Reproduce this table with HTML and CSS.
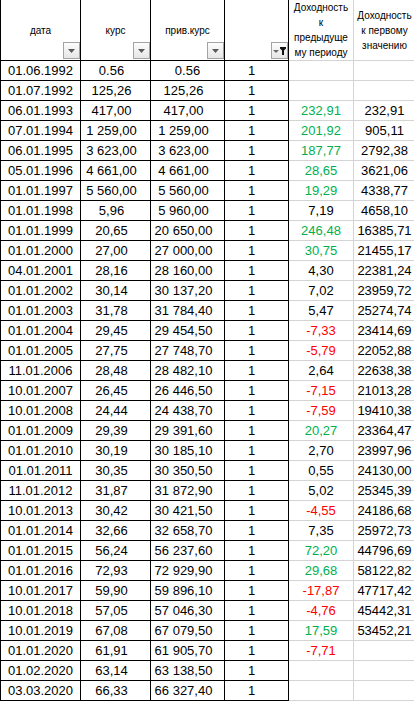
FILE: index.html
```html
<!DOCTYPE html>
<html lang="ru">
<head>
<meta charset="utf-8">
<title>Доходность</title>
<link rel="stylesheet" href="styles.css">
</head>
<body>
<div class="sheet">
  <div class="hd c1">дата<span class="flt"><svg width="15" height="15" viewBox="0 0 15 15"><path d="M4 6h7l-3.5 4z" fill="#5a5a5a"/></svg></span></div>
  <div class="hd">курс<span class="flt"><svg width="15" height="15" viewBox="0 0 15 15"><path d="M4 6h7l-3.5 4z" fill="#5a5a5a"/></svg></span></div>
  <div class="hd">прив.курс<span class="flt"><svg width="15" height="15" viewBox="0 0 15 15"><path d="M4 6h7l-3.5 4z" fill="#5a5a5a"/></svg></span></div>
  <div class="hd"><span class="flt"><svg width="15" height="15" viewBox="0 0 15 15"><path d="M1 7h6l-3 3z" fill="#6a6a6a"/><path d="M8 4h6v1.5l-2 2V12h-2V7.5l-2-2z" fill="#111"/></svg></span></div>
  <div class="hd c5">Доходность<br>к<br>предыдуще<br>му периоду</div>
  <div class="hd c6">Доходность<br>к первому<br>значению</div>

  <div class="cell c1">01.06.1992</div><div class="cell c2">0.56</div><div class="cell c3 txt">0.56</div><div class="cell c4">1</div><div class="cell c5"></div><div class="cell c6"></div>
  <div class="cell c1">01.07.1992</div><div class="cell c2">125,26</div><div class="cell c3">125,26</div><div class="cell c4">1</div><div class="cell c5"></div><div class="cell c6"></div>
  <div class="cell c1">06.01.1993</div><div class="cell c2">417,00</div><div class="cell c3">417,00</div><div class="cell c4">1</div><div class="cell c5 g">232,91</div><div class="cell c6">232,91</div>
  <div class="cell c1">07.01.1994</div><div class="cell c2">1 259,00</div><div class="cell c3">1 259,00</div><div class="cell c4">1</div><div class="cell c5 g">201,92</div><div class="cell c6">905,11</div>
  <div class="cell c1">06.01.1995</div><div class="cell c2">3 623,00</div><div class="cell c3">3 623,00</div><div class="cell c4">1</div><div class="cell c5 g">187,77</div><div class="cell c6">2792,38</div>
  <div class="cell c1">05.01.1996</div><div class="cell c2">4 661,00</div><div class="cell c3">4 661,00</div><div class="cell c4">1</div><div class="cell c5 g">28,65</div><div class="cell c6">3621,06</div>
  <div class="cell c1">01.01.1997</div><div class="cell c2">5 560,00</div><div class="cell c3">5 560,00</div><div class="cell c4">1</div><div class="cell c5 g">19,29</div><div class="cell c6">4338,77</div>
  <div class="cell c1">01.01.1998</div><div class="cell c2">5,96</div><div class="cell c3">5 960,00</div><div class="cell c4">1</div><div class="cell c5">7,19</div><div class="cell c6">4658,10</div>
  <div class="cell c1">01.01.1999</div><div class="cell c2">20,65</div><div class="cell c3">20 650,00</div><div class="cell c4">1</div><div class="cell c5 g">246,48</div><div class="cell c6">16385,71</div>
  <div class="cell c1">01.01.2000</div><div class="cell c2">27,00</div><div class="cell c3">27 000,00</div><div class="cell c4">1</div><div class="cell c5 g">30,75</div><div class="cell c6">21455,17</div>
  <div class="cell c1">04.01.2001</div><div class="cell c2">28,16</div><div class="cell c3">28 160,00</div><div class="cell c4">1</div><div class="cell c5">4,30</div><div class="cell c6">22381,24</div>
  <div class="cell c1">01.01.2002</div><div class="cell c2">30,14</div><div class="cell c3">30 137,20</div><div class="cell c4">1</div><div class="cell c5">7,02</div><div class="cell c6">23959,72</div>
  <div class="cell c1">01.01.2003</div><div class="cell c2">31,78</div><div class="cell c3">31 784,40</div><div class="cell c4">1</div><div class="cell c5">5,47</div><div class="cell c6">25274,74</div>
  <div class="cell c1">01.01.2004</div><div class="cell c2">29,45</div><div class="cell c3">29 454,50</div><div class="cell c4">1</div><div class="cell c5 r">-7,33</div><div class="cell c6">23414,69</div>
  <div class="cell c1">01.01.2005</div><div class="cell c2">27,75</div><div class="cell c3">27 748,70</div><div class="cell c4">1</div><div class="cell c5 r">-5,79</div><div class="cell c6">22052,88</div>
  <div class="cell c1">11.01.2006</div><div class="cell c2">28,48</div><div class="cell c3">28 482,10</div><div class="cell c4">1</div><div class="cell c5">2,64</div><div class="cell c6">22638,38</div>
  <div class="cell c1">10.01.2007</div><div class="cell c2">26,45</div><div class="cell c3">26 446,50</div><div class="cell c4">1</div><div class="cell c5 r">-7,15</div><div class="cell c6">21013,28</div>
  <div class="cell c1">10.01.2008</div><div class="cell c2">24,44</div><div class="cell c3">24 438,70</div><div class="cell c4">1</div><div class="cell c5 r">-7,59</div><div class="cell c6">19410,38</div>
  <div class="cell c1">01.01.2009</div><div class="cell c2">29,39</div><div class="cell c3">29 391,60</div><div class="cell c4">1</div><div class="cell c5 g">20,27</div><div class="cell c6">23364,47</div>
  <div class="cell c1">01.01.2010</div><div class="cell c2">30,19</div><div class="cell c3">30 185,10</div><div class="cell c4">1</div><div class="cell c5">2,70</div><div class="cell c6">23997,96</div>
  <div class="cell c1">01.01.2011</div><div class="cell c2">30,35</div><div class="cell c3">30 350,50</div><div class="cell c4">1</div><div class="cell c5">0,55</div><div class="cell c6">24130,00</div>
  <div class="cell c1">11.01.2012</div><div class="cell c2">31,87</div><div class="cell c3">31 872,90</div><div class="cell c4">1</div><div class="cell c5">5,02</div><div class="cell c6">25345,39</div>
  <div class="cell c1">10.01.2013</div><div class="cell c2">30,42</div><div class="cell c3">30 421,50</div><div class="cell c4">1</div><div class="cell c5 r">-4,55</div><div class="cell c6">24186,68</div>
  <div class="cell c1">01.01.2014</div><div class="cell c2">32,66</div><div class="cell c3">32 658,70</div><div class="cell c4">1</div><div class="cell c5">7,35</div><div class="cell c6">25972,73</div>
  <div class="cell c1">01.01.2015</div><div class="cell c2">56,24</div><div class="cell c3">56 237,60</div><div class="cell c4">1</div><div class="cell c5 g">72,20</div><div class="cell c6">44796,69</div>
  <div class="cell c1">01.01.2016</div><div class="cell c2">72,93</div><div class="cell c3">72 929,90</div><div class="cell c4">1</div><div class="cell c5 g">29,68</div><div class="cell c6">58122,82</div>
  <div class="cell c1">10.01.2017</div><div class="cell c2">59,90</div><div class="cell c3">59 896,10</div><div class="cell c4">1</div><div class="cell c5 r">-17,87</div><div class="cell c6">47717,42</div>
  <div class="cell c1">10.01.2018</div><div class="cell c2">57,05</div><div class="cell c3">57 046,30</div><div class="cell c4">1</div><div class="cell c5 r">-4,76</div><div class="cell c6">45442,31</div>
  <div class="cell c1">10.01.2019</div><div class="cell c2">67,08</div><div class="cell c3">67 079,50</div><div class="cell c4">1</div><div class="cell c5 g">17,59</div><div class="cell c6">53452,21</div>
  <div class="cell c1">01.01.2020</div><div class="cell c2">61,91</div><div class="cell c3">61 905,70</div><div class="cell c4">1</div><div class="cell c5 r">-7,71</div><div class="cell c6"></div>
  <div class="cell c1">01.02.2020</div><div class="cell c2">63,14</div><div class="cell c3">63 138,50</div><div class="cell c4">1</div><div class="cell c5"></div><div class="cell c6"></div>
  <div class="cell c1">03.03.2020</div><div class="cell c2">66,33</div><div class="cell c3">66 327,40</div><div class="cell c4">1</div><div class="cell c5"></div><div class="cell c6"></div>
</div>
</body>
</html>
```
FILE: styles.css
```css
html, body {
  margin: 0;
  padding: 0;
  background: #ffffff;
}

body {
  font-family: "Liberation Sans", Arial, sans-serif;
  color: #000000;
  overflow: hidden;
}

.sheet {
  display: grid;
  grid-template-columns: 81px 70px 74px 64px 65px 61px;
  grid-template-rows: 61px;
  grid-auto-rows: 20px;
}

.sheet > div {
  box-sizing: border-box;
  border-right: 1px solid #000000;
  border-bottom: 1px solid #000000;
}

.hd {
  position: relative;
  display: flex;
  align-items: center;
  justify-content: center;
  text-align: center;
  font-size: 10px;
  line-height: 15px;
}

.cell {
  font-size: 13px;
  line-height: 18px;
  padding-top: 1px;
  text-align: center;
  white-space: nowrap;
  overflow: hidden;
}

.sheet > .c1 {
  border-left: 1px solid #000000;
}

.cell.c2 {
  padding-right: 8px;
}

.cell.c3 {
  padding-right: 8px;
}

.cell.c3.txt {
  padding-right: 0;
}

.cell.c4 {
  padding-right: 10px;
}

.sheet > .c5,
.sheet > .c6 {
  border-right-color: #d4d4d4;
  border-bottom-color: #d4d4d4;
}

.sheet > .c6 {
  border-right: none;
}

.hd.c5,
.hd.c6 {
  overflow: hidden;
}

.g {
  color: #00b050;
}

.r {
  color: #ff0000;
}

.flt {
  position: absolute;
  right: 0;
  bottom: 1px;
  width: 17px;
  height: 17px;
  box-sizing: border-box;
  border: 1px solid #a3a3a3;
  background: linear-gradient(#fdfdfd, #e6e6e6);
}

.flt svg {
  display: block;
}
```
